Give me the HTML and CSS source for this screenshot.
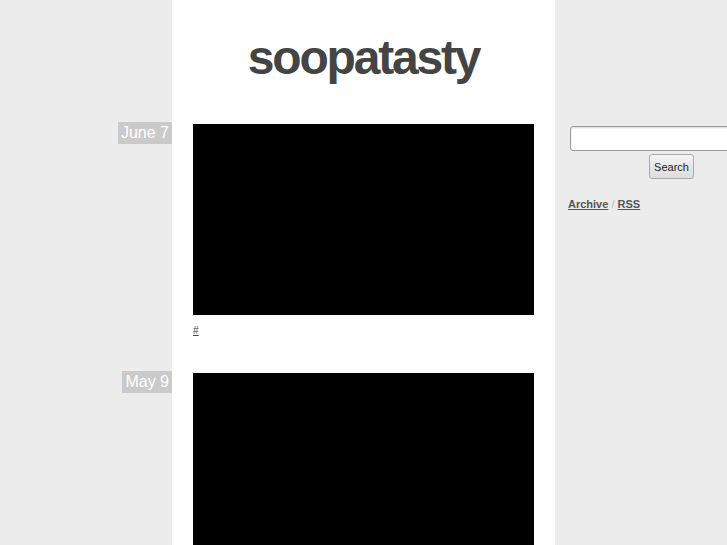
FILE: index.html
```html
<!DOCTYPE html>
<html>
<head>
<meta charset="utf-8">
<title>soopatasty</title>
<link rel="stylesheet" href="styles.css">
</head>
<body>
<div class="page">
  <header class="header">
    <h1 class="title">soopatasty</h1>
  </header>

  <div class="date date-1"><span class="date-label">June 7</span></div>
  <article class="post post-1">
    <div class="video"></div>
    <div class="meta"><a href="#">#</a></div>
  </article>

  <aside class="sidebar">
    <form class="search">
      <input class="search-input" type="text">
      <div class="search-btn-row"><button class="search-btn" type="button">Search</button></div>
    </form>
    <div class="links"><a href="#">Archive</a> <span class="sep">/</span> <a href="#">RSS</a></div>
  </aside>

  <div class="date date-2"><span class="date-label">May 9</span></div>
  <article class="post post-2">
    <div class="video"></div>
    <div class="meta"><a href="#">#</a></div>
  </article>
</div>
</body>
</html>
```

FILE: styles.css
```css
html, body {
  margin: 0;
  padding: 0;
}
body {
  background: #ececec;
  font-family: "Liberation Sans", Arial, sans-serif;
  overflow-x: hidden;
  min-height: 545px;
}
.page {
  display: grid;
  grid-template-columns: minmax(0, 1fr) 383px minmax(0, 1fr);
  grid-template-rows: 122px auto auto 1fr;
  min-height: 545px;
}
.header {
  grid-column: 2;
  grid-row: 1;
  background: #fff;
  padding-top: 34px;
  text-align: center;
}
.title {
  margin: 0;
  font-size: 48px;
  line-height: 48px;
  font-weight: bold;
  color: #444;
  letter-spacing: -2.2px;
}
.date {
  grid-column: 1;
  display: flex;
  justify-content: flex-end;
  align-items: flex-start;
}
.date-1 { grid-row: 2; }
.date-2 { grid-row: 3; }
.date-label {
  display: block;
  background: #cacaca;
  color: #fff;
  font-size: 16px;
  line-height: 22px;
  height: 22px;
  padding: 0 3px;
}
.post {
  grid-column: 2;
  background: #fff;
  padding: 2px 21px 34px 21px;
}
.post-1 { grid-row: 2; }
.post-2 { grid-row: 3 / span 2; }
.video {
  width: 341px;
  height: 191px;
  background: #000;
}
.meta {
  margin-top: 10px;
  font-size: 10px;
  line-height: 12px;
}
.meta a {
  color: #444;
  text-decoration: underline;
}
.sidebar {
  grid-column: 3;
  grid-row: 2 / span 3;
  min-width: 0;
  padding-top: 4px;
  padding-left: 13px;
}
.search,
.links {
  width: 207px;
}
.search {
  margin: 0;
}
.search-input {
  display: block;
  box-sizing: border-box;
  margin: 0 0 0 2px;
  width: 203px;
  height: 25px;
  border: 1px solid #9a9a9a;
  border-radius: 3px;
  background: #fff;
  box-shadow: inset 0 1px 2px rgba(0,0,0,0.15);
}
.search-btn-row {
  text-align: center;
  margin-top: 3px;
}
.search-btn {
  box-sizing: border-box;
  width: 45px;
  height: 25px;
  padding: 0;
  font-family: "Liberation Sans", Arial, sans-serif;
  font-size: 11px;
  color: #222;
  border: 1px solid #a8a8a8;
  border-radius: 3px;
  background: linear-gradient(#f4f4f4, #dcdcdc);
}
.links {
  margin-top: 19px;
  font-size: 11px;
  line-height: 13px;
  font-weight: bold;
}
.links a {
  color: #555;
  text-decoration: underline;
}
.links .sep {
  color: #bbb;
  font-weight: normal;
}
```
